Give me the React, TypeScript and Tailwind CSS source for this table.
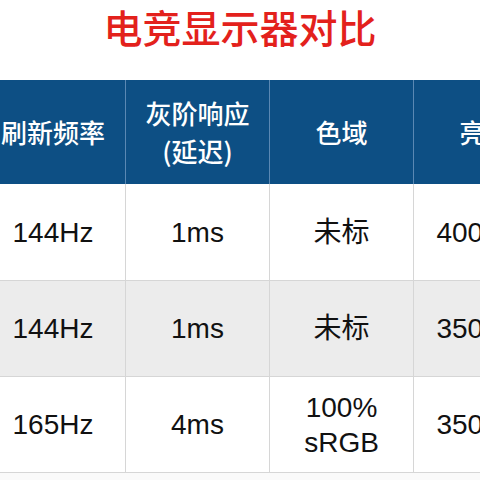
import React from 'react';

const cjk = "font-['Noto_Sans_CJK_SC',sans-serif]";
const latin = "font-['Liberation_Sans','Noto_Sans_CJK_SC',sans-serif]";

const headers = [['刷新频率'], ['灰阶响应', '(延迟)'], ['色域'], ['亮度']];

const rows = [
  { bg: 'bg-white', cells: [['144Hz'], ['1ms'], ['未标'], ['400 nits']] },
  { bg: 'bg-[#ececec]', cells: [['144Hz'], ['1ms'], ['未标'], ['350 nits']] },
  { bg: 'bg-white', cells: [['165Hz'], ['4ms'], ['100%', 'sRGB'], ['350 nits']] },
];

const App = () => {
  return (
    <div className="w-[480px] h-[480px] overflow-hidden bg-white">
      {/* Title */}
      <div className="h-[80px] flex justify-center pt-[3px]">
        <h1 className={`${cjk} text-[39px] leading-[46px] font-medium text-[#e3211c]`}>
          电竞显示器对比
        </h1>
      </div>

      <div className="ml-[-19px] w-[576px]">
        {/* Header */}
        <div className="grid grid-cols-[144px_144px_144px_144px] h-[104px] bg-[#0d4f84]">
          {headers.map((h, i) => (
            <div
              key={i}
              className={`flex flex-col items-center justify-center text-white ${cjk} font-medium text-[26px] leading-[38px] ${
                i > 0 ? 'border-l border-[#5a88b3]' : ''
              }`}
            >
              {h.map((line) => (
                <span key={line}>{line}</span>
              ))}
            </div>
          ))}
        </div>

        {/* Body */}
        {rows.map((row, r) => (
          <div
            key={r}
            className={`grid grid-cols-[144px_144px_144px_144px] h-[96px] ${row.bg} ${
              r > 0 ? 'border-t border-[#d6d6d6]' : ''
            }`}
          >
            {row.cells.map((c, i) => (
              <div
                key={i}
                className={`flex flex-col items-center justify-center text-[#111] ${latin} text-[28px] leading-[35px] whitespace-nowrap ${
                  i > 0 ? 'border-l border-[#d6d6d6]' : ''
                }`}
              >
                {c.map((line) => (
                  <span key={line}>{line}</span>
                ))}
              </div>
            ))}
          </div>
        ))}
        <div className="border-t border-[#d6d6d6] h-[8px] bg-[#fafafa]" />
      </div>
    </div>
  );
};

export default App;
